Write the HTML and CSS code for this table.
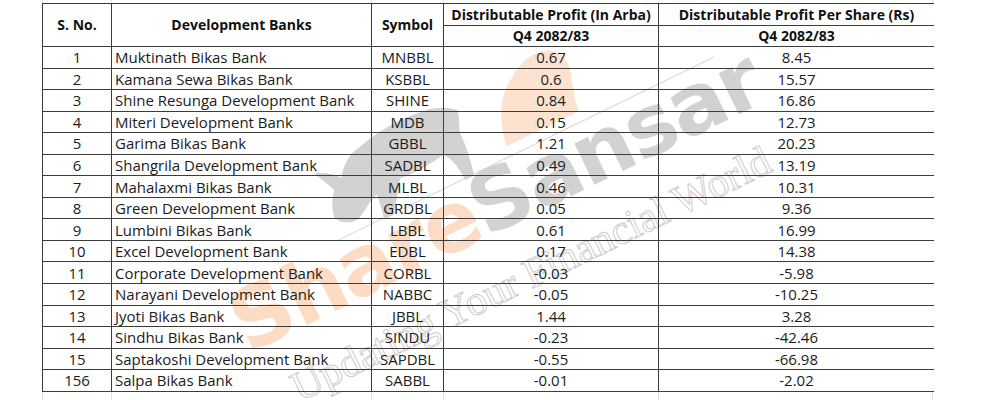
FILE: index.html
```html
<!DOCTYPE html>
<html>
<head>
<meta charset="utf-8">
<link rel="stylesheet" href="styles.css">
</head>
<body>
<div class="sheet">
  <div class="gridline-strip strip-top">
    <span class="gl c1"></span><span class="gl c2"></span><span class="gl c3"></span><span class="gl c4"></span><span class="gl c5"></span>
  </div>
  <div class="table-wrap">
    <div class="watermark" aria-hidden="true">
      <div class="wm-rule"></div>
      <svg class="wm-arrow" viewBox="0 0 100 80" width="100" height="80">
        <path d="M4 78 C8 52 18 30 40 18 C52 8 70 4 84 10 C94 16 98 28 94 40 C90 52 86 64 84 78 Z" fill="#fde3cf"/>
      </svg>
      <svg class="wm-bull" viewBox="0 0 170 100" width="170" height="100">
        <path d="M8 72 C10 62 14 54 20 48 C18 40 12 32 10 24 C20 28 28 34 32 40 C38 30 48 22 62 20 C84 14 112 12 136 16 C150 18 160 24 166 30 C164 38 160 44 158 52 C158 64 156 80 152 96 L142 96 C142 84 140 72 134 64 C118 66 100 68 84 66 C78 76 70 86 62 96 L52 96 C54 86 56 78 56 70 C46 74 38 80 30 84 C22 86 12 82 8 72 Z" fill="#d2d2d2"/>
      </svg>
      <div class="wm-title"><span class="wm-share">Share</span><span class="wm-sansar">Sansar</span></div>
      <div class="wm-tag">Updating Your Financial World</div>
    </div>
    <table class="sheet-table">
      <colgroup>
        <col class="w-sn"><col class="w-name"><col class="w-sym"><col class="w-dp"><col class="w-dps">
      </colgroup>
      <thead>
        <tr class="hrow1">
          <th rowspan="2">S. No.</th>
          <th rowspan="2">Development Banks</th>
          <th rowspan="2">Symbol</th>
          <th>Distributable Profit (In Arba)</th>
          <th>Distributable Profit Per Share (Rs)</th>
        </tr>
        <tr class="hrow2">
          <th>Q4 2082/83</th>
          <th>Q4 2082/83</th>
        </tr>
      </thead>
      <tbody>
        <tr><td>1</td><td class="name">Muktinath Bikas Bank</td><td>MNBBL</td><td>0.67</td><td>8.45</td></tr>
        <tr><td>2</td><td class="name">Kamana Sewa Bikas Bank</td><td>KSBBL</td><td>0.6</td><td>15.57</td></tr>
        <tr><td>3</td><td class="name">Shine Resunga Development Bank</td><td>SHINE</td><td>0.84</td><td>16.86</td></tr>
        <tr><td>4</td><td class="name">Miteri Development Bank</td><td>MDB</td><td>0.15</td><td>12.73</td></tr>
        <tr><td>5</td><td class="name">Garima Bikas Bank</td><td>GBBL</td><td>1.21</td><td>20.23</td></tr>
        <tr><td>6</td><td class="name">Shangrila Development Bank</td><td>SADBL</td><td>0.49</td><td>13.19</td></tr>
        <tr><td>7</td><td class="name">Mahalaxmi Bikas Bank</td><td>MLBL</td><td>0.46</td><td>10.31</td></tr>
        <tr><td>8</td><td class="name">Green Development Bank</td><td>GRDBL</td><td>0.05</td><td>9.36</td></tr>
        <tr><td>9</td><td class="name">Lumbini Bikas Bank</td><td>LBBL</td><td>0.61</td><td>16.99</td></tr>
        <tr><td>10</td><td class="name">Excel Development Bank</td><td>EDBL</td><td>0.17</td><td>14.38</td></tr>
        <tr><td>11</td><td class="name">Corporate Development Bank</td><td>CORBL</td><td>-0.03</td><td>-5.98</td></tr>
        <tr><td>12</td><td class="name">Narayani Development Bank</td><td>NABBC</td><td>-0.05</td><td>-10.25</td></tr>
        <tr><td>13</td><td class="name">Jyoti Bikas Bank</td><td>JBBL</td><td>1.44</td><td>3.28</td></tr>
        <tr><td>14</td><td class="name">Sindhu Bikas Bank</td><td>SINDU</td><td>-0.23</td><td>-42.46</td></tr>
        <tr><td>15</td><td class="name">Saptakoshi Development Bank</td><td>SAPDBL</td><td>-0.55</td><td>-66.98</td></tr>
        <tr><td>156</td><td class="name">Salpa Bikas Bank</td><td>SABBL</td><td>-0.01</td><td>-2.02</td></tr>
      </tbody>
    </table>
  </div>
  <div class="gridline-strip strip-bottom">
    <span class="gl c1"></span><span class="gl c2"></span><span class="gl c3"></span><span class="gl c4"></span><span class="gl c5"></span>
  </div>
</div>
</body>
</html>
```

FILE: styles.css
```css
html, body {
  margin: 0;
  padding: 0;
  background: #ffffff;
}

body {
  font-family: "Open Sans", "Noto Sans", sans-serif;
  color: #1b1b1b;
}

.sheet {
  padding-left: 42px;
  width: 892px;
  height: 400px;
  overflow: hidden;
}

.gridline-strip {
  display: flex;
}

.strip-top { height: 3px; }
.strip-bottom { height: 9px; }

.gl {
  display: block;
  border-left: 1px solid #e2e2e2;
  box-sizing: border-box;
}
.gl.c1 { width: 69px; }
.gl.c2 { width: 260px; }
.gl.c3 { width: 72px; }
.gl.c4 { width: 215px; }
.gl.c5 { width: 275px; border-right: 1px solid #e2e2e2; }

.table-wrap {
  position: relative;
  width: 892px;
}

.sheet-table {
  position: relative;
  z-index: 1;
  border-collapse: collapse;
  table-layout: fixed;
  width: 892px;
  font-size: 15px;
  background: transparent;
}

.w-sn { width: 69px; }
.w-name { width: 260px; }
.w-sym { width: 72px; }
.w-dp { width: 215px; }
.w-dps { width: 276px; }

.sheet-table th,
.sheet-table td {
  border: 1px solid #3c3c3c;
  padding: 0 3px;
  text-align: center;
  vertical-align: middle;
  white-space: nowrap;
  line-height: 18px;
}

.sheet-table th {
  font-weight: 700;
  font-size: 14px;
  color: #111;
}

.hrow1 { height: 22px; }
.hrow2 { height: 21px; }

.sheet-table tbody tr { height: 21.56px; }

.sheet-table td.name {
  text-align: left;
}

/* watermark */
.watermark {
  position: absolute;
  left: 470px;
  top: 232px;
  width: 620px;
  height: 220px;
  transform: translate(-50%, -50%) rotate(-26deg);
  z-index: 0;
  pointer-events: none;
}

.wm-title {
  position: absolute;
  left: 0;
  right: 0;
  top: 30px;
  text-align: center;
  font-family: "DejaVu Sans", sans-serif;
  font-weight: 700;
  font-size: 84px;
  line-height: 84px;
  letter-spacing: -2px;
}

.wm-share { color: #fcdcc4; }
.wm-sansar { color: #d2d2d2; }

.wm-tag {
  position: absolute;
  left: 0;
  right: 0;
  top: 132px;
  text-align: center;
  font-family: "Liberation Serif", serif;
  font-size: 42px;
  line-height: 42px;
  color: #ffffff;
  -webkit-text-stroke: 1px #cdcdcd;
}

.wm-rule {
  position: absolute;
  left: 150px;
  width: 420px;
  top: 38px;
  border-top: 1.5px solid #d8d8d8;
}

.wm-bull {
  position: absolute;
  left: 150px;
  top: -56px;
}

.wm-arrow {
  position: absolute;
  left: 340px;
  top: -50px;
}
```
